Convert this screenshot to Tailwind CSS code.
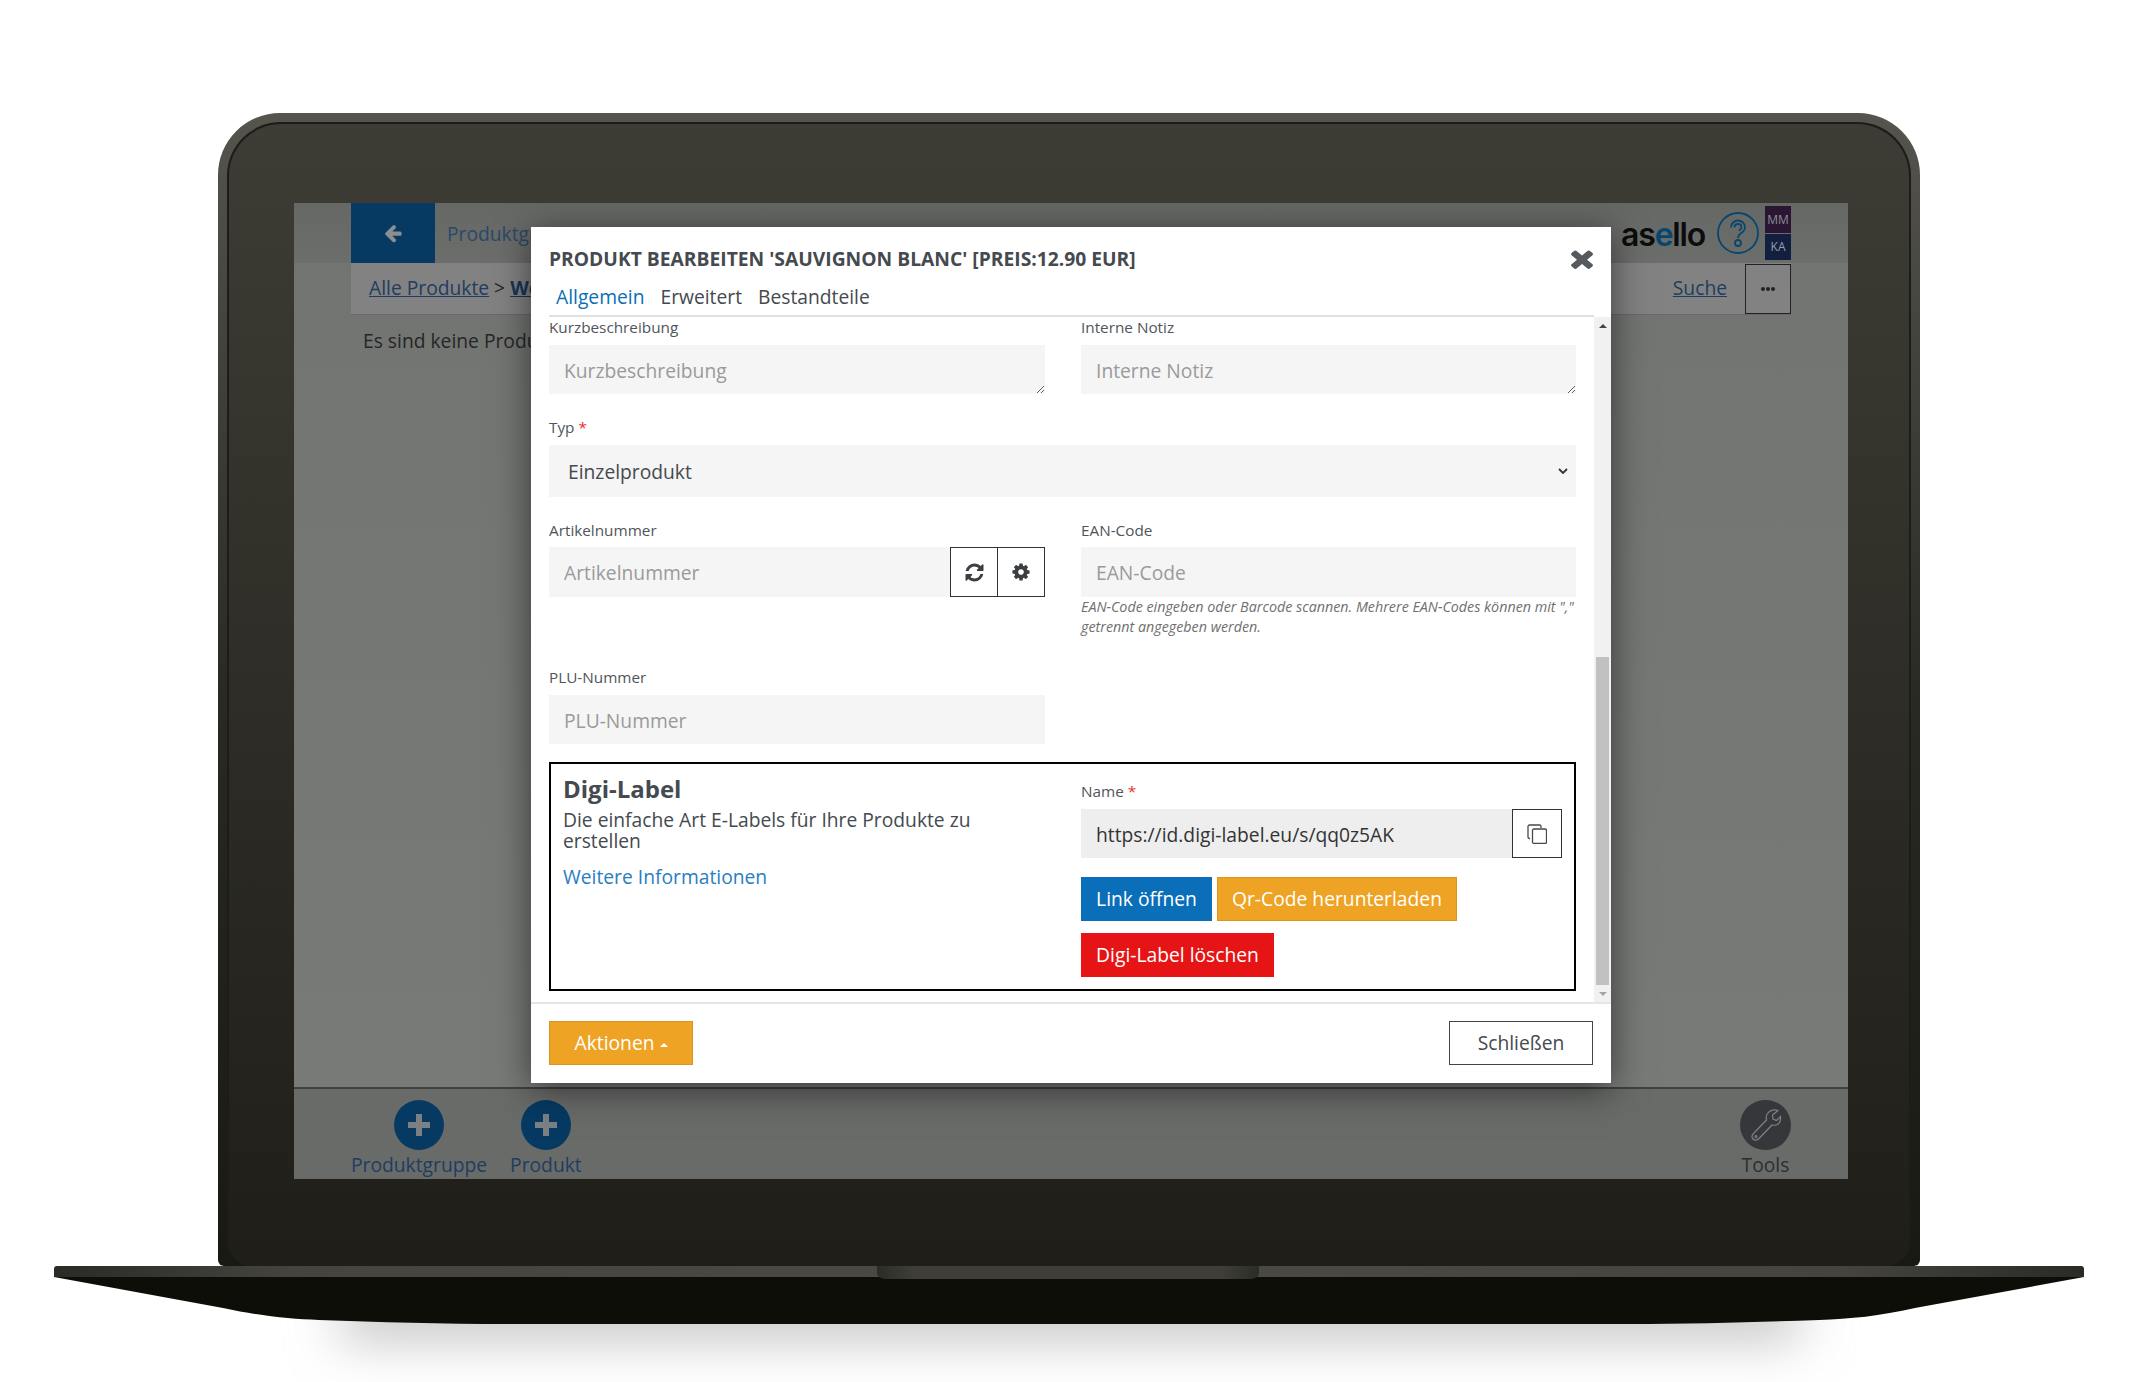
<!DOCTYPE html>
<html lang="de">
<head>
<meta charset="utf-8">
<title>asello</title>
<script src="https://cdn.jsdelivr.net/npm/@tailwindcss/browser@4"></script>
</head>
<body class="bg-white font-['Open_Sans',sans-serif] text-[#444a4f] overflow-hidden">
<div class="w-[2143px] h-[1382px] pt-[113px] overflow-hidden">
  <!-- Lid -->
  <div class="ml-[218px] w-[1702px] h-[1153px] rounded-t-[62px] rounded-b-[6px] bg-gradient-to-b from-[#55554e] via-[#2a2a25] to-[#191914] p-[9px] pb-0">
    <div class="h-full rounded-t-[54px] rounded-b-[24px] border-t-2 border-x-2 border-[#1c1c18] bg-gradient-to-b from-[#3d3d35] to-[#1f1e19] pt-[79px] pl-[65px]">
      <!-- Screen -->
      <div class="relative w-[1554px] h-[976px] flex flex-col bg-gradient-to-b from-[#727472] to-[#797b79] overflow-hidden">
        <header class="h-[60px] shrink-0 flex items-center pl-[57px] pr-[57px] bg-gradient-to-b from-[#666866] to-[#6c6e6c]">
          <div class="w-[84px] h-full bg-[#063a63] flex items-center justify-center">
            <svg viewBox="0 0 1792 1792" class="w-[20px] h-[20px] fill-[#8c8d8e]"><path d="M1664 896v128q0 53-32.5 90.5t-84.5 37.5h-704l293 294q38 36 38 90t-38 90l-75 76q-37 37-90 37-52 0-91-37l-651-652q-37-37-37-90 0-52 37-91l651-650q38-38 91-38 52 0 90 38l75 74q38 38 38 91t-38 91l-293 293h704q52 0 84.5 37.5t32.5 90.5z"/></svg>
          </div>
          <span class="ml-[12px] mt-[2px] text-[19.25px] text-[#2b4868]">Produktgruppen</span>
          <div class="ml-auto flex items-center">
            <span class="font-['Inter',sans-serif] font-semibold text-[32px] leading-none tracking-[-1.2px] text-[#0c0c0c] mt-[3px]">as<span class="text-[#07476f]">e</span>llo</span>
            <svg viewBox="0 0 42 42" class="ml-[12px] w-[42px] h-[42px] fill-none stroke-[#07476f] stroke-[1.8]"><circle cx="21" cy="21" r="20"/><path d="M14 15.5c0-4 3.2-7 7-7s7 3 7 6.8c0 3-1.8 4.5-4 6-1.8 1.2-3 2.3-3 4.7"/><path d="M17.5 15.5c0-2 1.5-3.5 3.5-3.5s3.5 1.5 3.5 3.3c0 1.500-1 2.500-2.500 3.500"/><circle cx="21" cy="31" r="3"/></svg>
            <div class="ml-[6px] w-[26px] flex flex-col gap-[1px]">
              <div class="h-[27px] bg-[#2a1533] text-[#8d8d94] text-[12px] flex items-center justify-center">MM</div>
              <div class="h-[26px] bg-[#121f3f] text-[#9a9ca6] text-[12px] flex items-center justify-center">KA</div>
            </div>
          </div>
        </header>
        <div class="mx-[57px] h-[52px] shrink-0 flex items-center bg-[#828282] border-b border-[#686a68] pl-[18px]">
          <a class="text-[19.25px] text-[#1f3d60] underline">Alle Produkte</a>
          <span class="mx-[5px] text-[19.25px] text-[#222]">&gt;</span>
          <a class="text-[19.25px] font-bold text-[#173658] underline">Weine</a>
          <a class="ml-auto text-[19.25px] text-[#1f3d60] underline">Suche</a>
          <button class="ml-[18px] w-[46px] h-[50px] border border-[#222] flex items-center justify-center gap-[1px]">
            <i class="w-[4px] h-[4px] rounded-full bg-[#222]"></i><i class="w-[4px] h-[4px] rounded-full bg-[#222]"></i><i class="w-[4px] h-[4px] rounded-full bg-[#222]"></i>
          </button>
        </div>
        <main class="flex-1 pl-[69px] pt-[12px]">
          <p class="text-[19.25px] leading-[28px] text-[#262626]">Es sind keine Produkte vorhanden</p>
        </main>
        <footer class="h-[92px] shrink-0 border-t-2 border-[#3f403f] bg-[#696b69] flex justify-between px-[57px] pt-[11px]">
          <div class="flex gap-[23px]">
            <div class="flex flex-col items-center">
              <div class="w-[50px] h-[51px] rounded-full bg-[#063a63] flex items-center justify-center">
                <svg viewBox="0 0 24 24" class="w-[24px] h-[24px] fill-[#7d8082]"><path d="M9 1h6v8h8v6h-8v8H9v-8H1V9h8z"/></svg>
              </div>
              <span class="text-[19.25px] leading-[28px] mt-[1px] text-[#1f3d60]">Produktgruppe</span>
            </div>
            <div class="flex flex-col items-center">
              <div class="w-[50px] h-[51px] rounded-full bg-[#063a63] flex items-center justify-center">
                <svg viewBox="0 0 24 24" class="w-[24px] h-[24px] fill-[#7d8082]"><path d="M9 1h6v8h8v6h-8v8H9v-8H1V9h8z"/></svg>
              </div>
              <span class="text-[19.25px] leading-[28px] mt-[1px] text-[#1f3d60]">Produkt</span>
            </div>
          </div>
          <div class="flex flex-col items-center">
            <div class="w-[51px] h-[51px] rounded-full bg-[#36373a] flex items-center justify-center">
              <svg viewBox="0 0 32 36" class="w-[32px] h-[36px] fill-none stroke-[#7f8183] stroke-[1.2]"><path d="M28 3.5l-5.500 4.500.5 4 3.500 1.500 4-4c.5 4-1 7.500-4.500 8.500-1.500.5-3 .2-4 0L9 31.500c-1.800 2-4.500 2-6 .5s-1.300-3.800.5-5.500L16.500 13c-.5-2-.5-4.500 1-6.500 2.500-3.500 7-4.500 10.500-3z"/><circle cx="6" cy="29.500" r="1"/></svg>
            </div>
            <span class="text-[19.25px] leading-[28px] mt-[1px] text-[#2d2e30]">Tools</span>
          </div>
        </footer>

        <!-- Modal -->
        <div class="absolute left-[237px] top-[24px] w-[1080px] h-[856px] bg-white flex flex-col shadow-[0_6px_34px_rgba(0,0,0,0.55)]">
          <div class="h-[90px] shrink-0 pl-[18px] relative">
            <div class="border-b-2 border-[#dfdfdf] h-[90px] mr-[17px]">
              <div class="flex items-center justify-between pt-[20px] pr-[1px]">
                <h2 class="text-[19.25px] leading-[24px] font-bold text-[#444a4f]">PRODUKT BEARBEITEN 'SAUVIGNON BLANC' [PREIS:12.90 EUR]</h2>
                <svg viewBox="300 270 1190 1290" preserveAspectRatio="none" class="w-[22px] h-[20px] fill-[#555a5e]"><path d="M1490 1322q0 40-28 68l-136 136q-28 28-68 28t-68-28l-294-294-294 294q-28 28-68 28t-68-28l-136-136q-28-28-28-68t28-68l294-294-294-294q-28-28-28-68t28-68l136-136q28-28 68-28t68 28l294 294 294-294q28-28 68-28t68 28l136 136q28 28 28 68t-28 68l-294 294 294 294q28 28 28 68z"/></svg>
              </div>
              <nav class="flex gap-[16px] pl-[7px] mt-[14px] text-[19.25px] leading-[24px]">
                <a class="text-[#0a6fb8]">Allgemein</a><a>Erweitert</a><a>Bestandteile</a>
              </nav>
            </div>
          </div>

          <div class="flex-1 min-h-0 flex">
            <div class="w-[1063px] overflow-hidden px-[18px]">
              <div class="grid grid-cols-[496px_495px] gap-x-[36px]">
                <label class="block">
                  <span class="block text-[15.3px] text-[#50555a] leading-[20px] mb-[8px]">Kurzbeschreibung</span>
                  <textarea placeholder="Kurzbeschreibung" class="block w-full h-[49px] bg-[#f5f5f5] pl-[15px] pt-[12px] text-[19.25px] leading-[28px] placeholder:text-[#9a9a9a] outline-none"></textarea>
                </label>
                <label class="block">
                  <span class="block text-[15.3px] text-[#50555a] leading-[20px] mb-[8px]">Interne Notiz</span>
                  <textarea placeholder="Interne Notiz" class="block w-full h-[49px] bg-[#f5f5f5] pl-[15px] pt-[12px] text-[19.25px] leading-[28px] placeholder:text-[#9a9a9a] outline-none"></textarea>
                </label>
              </div>

              <label class="block mt-[23px]">
                <span class="block text-[15.3px] text-[#50555a] leading-[20px] mb-[8px]">Typ <span class="text-[#ee2b2b]">*</span></span>
                <span class="relative block">
                  <select class="block w-full h-[52px] appearance-none bg-[#f5f5f5] pl-[19px] pt-[2px] text-[19.25px] outline-none"><option>Einzelprodukt</option></select>
                  <svg viewBox="0 0 10 6" class="absolute right-[8px] top-[23px] w-[10px] h-[6px] fill-none stroke-[#333] stroke-[1.8]"><path d="M1 1l4 4 4-4"/></svg>
                </span>
              </label>

              <div class="grid grid-cols-[496px_495px] gap-x-[36px] mt-[23px]">
                <div>
                  <span class="block text-[15.3px] text-[#50555a] leading-[20px] mb-[7px]">Artikelnummer</span>
                  <div class="flex h-[50px]">
                    <input placeholder="Artikelnummer" class="flex-1 min-w-0 bg-[#f5f5f5] pl-[15px] pt-[2px] text-[19.25px] placeholder:text-[#9a9a9a] outline-none">
                    <button class="w-[48px] border border-[#333] flex items-center justify-center">
                      <svg viewBox="0 0 1792 1792" class="w-[21px] h-[21px] fill-[#3b3f43]"><path d="M1639 1056q0 5-1 7-64 268-268 434.5t-478 166.5q-146 0-282.5-55t-243.5-157l-129 129q-19 19-45 19t-45-19-19-45v-448q0-26 19-45t45-19h448q26 0 45 19t19 45-19 45l-137 137q71 66 161 102t187 36q134 0 250-65t186-179q11-17 53-117 8-23 30-23h192q13 0 22.5 9.5t9.5 22.5zm25-800v448q0 26-19 45t-45 19h-448q-26 0-45-19t-19-45 19-45l138-138q-148-137-349-137-134 0-250 65t-186 179q-11 17-53 117-8 23-30 23h-199q-13 0-22.5-9.5t-9.5-22.5v-7q65-268 270-434.5t480-166.5q146 0 284 55.5t245 156.5l130-129q19-19 45-19t45 19 19 45z"/></svg>
                    </button>
                    <button class="w-[48px] -ml-px border border-[#333] flex items-center justify-center">
                      <svg viewBox="0 0 1792 1792" class="w-[20px] h-[20px] fill-[#3b3f43]"><path d="M1152 896q0-106-75-181t-181-75-181 75-75 181 75 181 181 75 181-75 75-181zm512-109v222q0 12-8 23t-20 13l-185 28q-19 54-39 91 35 50 107 138 10 12 10 25t-9 23q-27 37-99 108t-94 71q-12 0-26-9l-138-108q-44 23-91 38-16 136-29 186-7 28-36 28h-222q-14 0-24.5-8.5t-11.5-21.5l-28-184q-49-16-90-37l-141 107q-10 9-25 9-14 0-25-11-126-114-165-168-7-10-7-23 0-12 8-23 15-21 51-66.5t54-70.5q-27-50-41-99l-183-27q-13-2-21-12.5t-8-23.5v-222q0-12 8-23t19-13l186-28q14-46 39-92-40-57-107-138-10-12-10-24 0-10 9-23 26-36 98.5-107.5t94.5-71.5q13 0 26 10l138 107q44-23 91-38 16-136 29-186 7-28 36-28h222q14 0 24.5 8.5t11.5 21.5l28 184q49 16 90 37l142-107q9-9 24-9 13 0 25 10 129 119 165 170 7 8 7 22 0 12-8 23-15 21-51 66.5t-54 70.5q26 50 41 98l183 28q13 2 21 12.5t8 23.5z"/></svg>
                    </button>
                  </div>
                </div>
                <div>
                  <span class="block text-[15.3px] text-[#50555a] leading-[20px] mb-[7px]">EAN-Code</span>
                  <input placeholder="EAN-Code" class="block w-full h-[50px] bg-[#f5f5f5] pl-[15px] pt-[1px] text-[19.25px] placeholder:text-[#9a9a9a] outline-none">
                  <p class="text-[14.3px] leading-[20px] italic text-[#6f6f6f] whitespace-nowrap">EAN-Code eingeben oder Barcode scannen. Mehrere EAN-Codes können mit ","<br>getrennt angegeben werden.</p>
                </div>
              </div>

              <div class="w-[496px] mt-[30px]">
                <span class="block text-[15.3px] text-[#50555a] leading-[20px] mb-[8px]">PLU-Nummer</span>
                <input placeholder="PLU-Nummer" class="block w-full h-[49px] bg-[#f5f5f5] pl-[15px] pt-[1px] text-[19.25px] placeholder:text-[#9a9a9a] outline-none">
              </div>

              <section class="mt-[18px] h-[229px] border-2 border-black grid grid-cols-[530px_1fr]">
                <div class="pl-[12px] pt-[10px]">
                  <h3 class="text-[24px] leading-[30px] font-bold text-[#444a4f]">Digi-Label</h3>
                  <p class="w-[450px] mt-[5px] text-[19.25px] leading-[21px]">Die einfache Art E-Labels für Ihre Produkte zu erstellen</p>
                  <a class="block mt-[14px] text-[19.25px] leading-[24px] text-[#2a7ec0]">Weitere Informationen</a>
                </div>
                <div class="pt-[17px] pr-[12px]">
                  <span class="block text-[15.3px] text-[#50555a] leading-[20px] mb-[8px]">Name <span class="text-[#ee2b2b]">*</span></span>
                  <div class="flex h-[49px]">
                    <input value="https://id.digi-label.eu/s/qq0z5AK" class="flex-1 min-w-0 bg-[#eeeeee] pl-[15px] pt-[3px] text-[19.25px] text-[#333] outline-none">
                    <button class="w-[50px] border border-[#333] flex items-center justify-center">
                      <svg viewBox="0 0 20 20" class="w-[20px] h-[20px] fill-none stroke-[#444a4f] stroke-[1.3]"><path d="M3 14.5H2.5a1.5 1.5 0 0 1-1.5-1.5V2.5A1.5 1.5 0 0 1 2.5 1h10a1.5 1.5 0 0 1 1.5 1.5V4"/><rect x="5.5" y="5" width="14" height="14.5" rx="1.5"/></svg>
                    </button>
                  </div>
                  <div class="flex gap-[5px] mt-[19px]">
                    <button class="w-[131px] h-[44px] bg-[#0a6fb8] text-white text-[19.25px]">Link öffnen</button>
                    <button class="w-[240px] h-[44px] bg-[#eea324] border border-[#dd9520] text-white text-[19.25px]">Qr-Code herunterladen</button>
                  </div>
                  <button class="block mt-[12px] w-[193px] h-[44px] bg-[#e61414] text-white text-[19.25px]">Digi-Label löschen</button>
                </div>
              </section>
            </div>
            <!-- Scrollbar -->
            <div class="w-[17px] bg-[#f1f1f1] flex flex-col items-center">
              <div class="h-[17px] flex items-center justify-center"><i class="w-0 h-0 border-x-[4px] border-x-transparent border-b-[4px] border-b-[#444]"></i></div>
              <div class="h-[323px]"></div>
              <div class="w-[13px] h-[328px] bg-[#c1c1c1]"></div>
              <div class="flex-1 flex items-center justify-center"><i class="w-0 h-0 border-x-[4px] border-x-transparent border-t-[4px] border-t-[#a3a3a3]"></i></div>
            </div>
          </div>

          <div class="h-[81px] shrink-0 border-t-2 border-[#e6e6e6] flex justify-between pl-[18px] pr-[18px] pt-[17px]">
            <button class="w-[144px] h-[44px] bg-[#eea324] border border-[#dd9520] text-white text-[19.25px] flex items-center justify-center gap-[5px]">Aktionen <i class="mt-[3px] w-0 h-0 border-x-[4px] border-x-transparent border-b-[4px] border-b-white"></i></button>
            <button class="w-[144px] h-[44px] bg-white border border-[#444] text-[19.25px]">Schließen</button>
          </div>
        </div>
      </div>
    </div>
  </div>

  <!-- Base -->
  <svg viewBox="0 0 2143 116" class="block w-[2143px] h-[116px]">
    <defs>
      <linearGradient id="band" x1="0" x2="1" y1="0" y2="0">
        <stop offset="0" stop-color="#2b2b26"/><stop offset=".12" stop-color="#45453e"/><stop offset=".5" stop-color="#4b4b43"/><stop offset=".88" stop-color="#45453e"/><stop offset="1" stop-color="#2b2b26"/>
      </linearGradient>
      <linearGradient id="notch" x1="0" x2="1" y1="0" y2="0">
        <stop offset="0" stop-color="#2c2c27"/><stop offset=".1" stop-color="#3f3f38"/><stop offset=".9" stop-color="#3f3f38"/><stop offset="1" stop-color="#2c2c27"/>
      </linearGradient>
      <filter id="soft" filterUnits="userSpaceOnUse" x="0" y="0" width="2143" height="200"><feGaussianBlur stdDeviation="26"/></filter>
    </defs>
    <path d="M340 30H1800V72H340z" fill="#bcbcbc" filter="url(#soft)"/>
    <path d="M54 11L223 42C260 50 290 53 319 54C380 56 440 58 510 58H1628C1700 58 1760 56 1819 54C1850 53 1880 50 1915 42L2084 11V4H54z" fill="#0e0e09"/>
    <path d="M57 0H2081Q2084 0 2084 3V11H54V3Q54 0 57 0z" fill="url(#band)"/>
    <path d="M877 0H1259V6Q1259 13 1250 13H886Q877 13 877 6z" fill="url(#notch)"/>
  </svg>
</div>
</body>
</html>
